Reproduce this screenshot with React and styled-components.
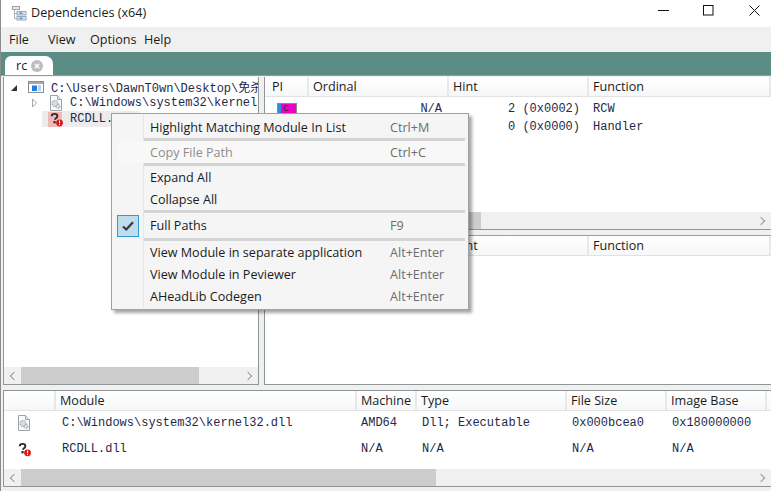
import styled, { createGlobalStyle } from "styled-components";

const uiFont = `"Open Sans", "Noto Sans", sans-serif`;
const monoFont = `"Liberation Mono", "Noto Sans CJK SC", monospace`;

const importColumns = "44px 140px 140px 1fr";
const moduleColumns = "52px 301px 60px 150px 100px 100px 1fr";

export default function App() {
    return (
        <Window>
            <GlobalStyle />
            <TitleBar>
                <AppIcon />
                <TitleText>Dependencies (x64)</TitleText>
                <WindowButtons>
                    <WindowButton><svg width="11" height="11"><path d="M0 5.5h11" stroke="#111" /></svg></WindowButton>
                    <WindowButton><svg width="11" height="11"><rect x=".5" y=".5" width="9.5" height="9.5" fill="none" stroke="#111" /></svg></WindowButton>
                    <WindowButton><svg width="11" height="11"><path d="M.5.5l10 10M10.5.5l-10 10" stroke="#111" /></svg></WindowButton>
                </WindowButtons>
            </TitleBar>
            <MenuBar>
                <MenuTitle $width={39}>File</MenuTitle>
                <MenuTitle $width={42}>View</MenuTitle>
                <MenuTitle $width={54}>Options</MenuTitle>
                <MenuTitle>Help</MenuTitle>
            </MenuBar>
            <TabStrip>
                <Tab>
                    rc
                    <TabClose><svg width="12" height="12"><circle cx="6" cy="6" r="6" fill="#bdbdbd" /><path d="M3.8 3.8l4.4 4.4M8.2 3.8l-4.4 4.4" stroke="#fff" strokeWidth="1.5" /></svg></TabClose>
                </Tab>
            </TabStrip>
            <Workspace>
                <UpperArea>
                    <TreePane>
                        <TreeBody>
                            <TreeRow $indent={5}>
                                <Expander><svg width="9" height="9"><path d="M8 2v6H2z" fill="#333" /></svg></Expander>
                                <RootIcon />
                                <MonoText>C:\Users\DawnT0wn\Desktop\免杀\rc</MonoText>
                            </TreeRow>
                            <TreeRow $indent={26}>
                                <Expander><svg width="9" height="10"><path d="M2.5 1l4 4-4 4z" fill="#fff" stroke="#a6a6a6" /></svg></Expander>
                                <DllIcon />
                                <MonoText>C:\Windows\system32\kernel32.dll</MonoText>
                            </TreeRow>
                            <TreeRow $indent={26} $selected>
                                <Expander />
                                <MissingIcon $tinted />
                                <MonoText>RCDLL.dll</MonoText>
                            </TreeRow>
                        </TreeBody>
                        <Scrollbar $thumbStart={17} $thumbWidth={178} />
                    </TreePane>
                    <RightColumn>
                        <ImportsPane>
                            <HeaderRow $columns={importColumns}>
                                <HeaderCell $first>PI</HeaderCell>
                                <HeaderCell>Ordinal</HeaderCell>
                                <HeaderCell>Hint</HeaderCell>
                                <HeaderCell>Function</HeaderCell>
                            </HeaderRow>
                            <ImportsBody>
                                <ImportRow $columns={importColumns}>
                                    <ImportBadge>c</ImportBadge>
                                    <OrdinalCell>N/A</OrdinalCell>
                                    <HintCell>2 (0x0002)</HintCell>
                                    <FunctionCell>RCW</FunctionCell>
                                </ImportRow>
                                <ImportRow $columns={importColumns}>
                                    <span />
                                    <OrdinalCell />
                                    <HintCell>0 (0x0000)</HintCell>
                                    <FunctionCell>Handler</FunctionCell>
                                </ImportRow>
                            </ImportsBody>
                            <Scrollbar $thumbStart={17} $thumbWidth={199} />
                        </ImportsPane>
                        <ExportsPane>
                            <HeaderRow $columns={importColumns}>
                                <HeaderCell $first>PI</HeaderCell>
                                <HeaderCell>Ordinal</HeaderCell>
                                <HeaderCell>Hint</HeaderCell>
                                <HeaderCell>Function</HeaderCell>
                            </HeaderRow>
                        </ExportsPane>
                    </RightColumn>
                </UpperArea>
                <ModulesPane>
                    <HeaderRow $columns={moduleColumns}>
                        <HeaderCell />
                        <HeaderCell>Module</HeaderCell>
                        <HeaderCell>Machine</HeaderCell>
                        <HeaderCell>Type</HeaderCell>
                        <HeaderCell>File Size</HeaderCell>
                        <HeaderCell>Image Base</HeaderCell>
                        <HeaderCell />
                    </HeaderRow>
                    <ModulesBody>
                        <ModuleRow $columns={moduleColumns}>
                            <ModuleIcon><DllIcon /></ModuleIcon>
                            <ModuleCell $pad={6}>C:\Windows\system32\kernel32.dll</ModuleCell>
                            <ModuleCell $pad={4}>AMD64</ModuleCell>
                            <ModuleCell>Dll; Executable</ModuleCell>
                            <ModuleCell>0x000bcea0</ModuleCell>
                            <ModuleCell>0x180000000</ModuleCell>
                        </ModuleRow>
                        <ModuleRow $columns={moduleColumns}>
                            <ModuleIcon><MissingIcon /></ModuleIcon>
                            <ModuleCell $pad={6}>RCDLL.dll</ModuleCell>
                            <ModuleCell $pad={4}>N/A</ModuleCell>
                            <ModuleCell>N/A</ModuleCell>
                            <ModuleCell>N/A</ModuleCell>
                            <ModuleCell>N/A</ModuleCell>
                        </ModuleRow>
                    </ModulesBody>
                    <Scrollbar $thumbStart={17} $thumbWidth={415} />
                </ModulesPane>
            </Workspace>
            <ContextMenu>
                <MenuItem label="Highlight Matching Module In List" shortcut="Ctrl+M" />
                <MenuSeparator />
                <MenuItem label="Copy File Path" shortcut="Ctrl+C" disabled />
                <MenuSeparator />
                <MenuItem label="Expand All" />
                <MenuItem label="Collapse All" />
                <MenuSeparator />
                <MenuItem label="Full Paths" shortcut="F9" checked />
                <MenuSeparator />
                <MenuItem label="View Module in separate application" shortcut="Alt+Enter" />
                <MenuItem label="View Module in Peviewer" shortcut="Alt+Enter" />
                <MenuItem label="AHeadLib Codegen" shortcut="Alt+Enter" />
            </ContextMenu>
        </Window>
    );
}

function MenuItem({ label, shortcut, disabled, checked }) {
    return (
        <ItemRow $disabled={disabled} $tall={checked}>
            <ItemGutter>
                {checked && (
                    <CheckBox>
                        <svg width="12" height="10" viewBox="0 0 12 10"><path d="M1 5.5l3.2 3L11 1.2" fill="none" stroke="#33393f" strokeWidth="2.2" /></svg>
                    </CheckBox>
                )}
            </ItemGutter>
            <ItemLabel>{label}</ItemLabel>
            <ItemShortcut>{shortcut}</ItemShortcut>
        </ItemRow>
    );
}

function AppIcon() {
    return (
        <IconBox $size={16}>
            <svg width="16" height="16" viewBox="0 0 16 16">
                <path d="M3.5 4v9.5H6M3.5 8.5H6" fill="none" stroke="#b0b0b0" />
                <rect x="1.5" y="1.5" width="7" height="3" fill="#e6e6e6" stroke="#a3a3a3" />
                <rect x="6" y="6.5" width="9" height="3.5" fill="#d6e4f0" stroke="#9aa9b6" />
                <rect x="8.5" y="7.5" width="3" height="1.5" fill="#4f93d8" />
                <rect x="6" y="11.5" width="9" height="3.5" fill="#d6e4f0" stroke="#9aa9b6" />
                <rect x="8.5" y="12.5" width="3" height="1.5" fill="#4f93d8" />
            </svg>
        </IconBox>
    );
}

function RootIcon() {
    return (
        <IconBox $size={16}>
            <svg width="16" height="12" viewBox="0 0 16 12">
                <rect x=".5" y=".5" width="15" height="11" fill="#fff" stroke="#8d8d8d" />
                <rect x="1" y="1" width="14" height="2" fill="#a9a9a9" />
                <rect x="4" y="4.5" width="5" height="5.5" fill="#1f7fe0" />
                <path d="M10 5h3M10 7h3M10 9h3" stroke="#6aa6e0" />
            </svg>
        </IconBox>
    );
}

function DllIcon() {
    return (
        <IconBox $size={14}>
            <svg width="12" height="16" viewBox="0 0 12 16">
                <path d="M.5.5h7l4 4v11H.5z" fill="#fafafa" stroke="#a3a3a3" />
                <path d="M7.5.5v4h4" fill="#e4e4e4" stroke="#a3a3a3" />
                <circle cx="5" cy="8.5" r="3" fill="#d8dde2" stroke="#8793a0" strokeDasharray="1.5 1" />
                <circle cx="8" cy="11.5" r="2" fill="#cfe0ec" stroke="#8793a0" strokeDasharray="1 .8" />
            </svg>
        </IconBox>
    );
}

function MissingIcon({ $tinted }) {
    return (
        <MissingBox $tinted={$tinted}>
            <svg width="16" height="15" viewBox="0 0 16 15">
                <path d="M4 4C4 2.4 5.2 1.5 7 1.5s3 .9 3 2.4c0 1.2-.8 1.7-1.5 2.2-.6.4-1 .8-1 1.6" fill="none" stroke="#2a2a2a" strokeWidth="2" />
                <rect x="5.8" y="9.2" width="2.4" height="2.4" fill="#2a2a2a" />
                <circle cx="12.3" cy="11" r="3.6" fill="#e01010" />
                <path d="M12.3 8.6v2.8M12.3 12.2v1.2" stroke="#fff" strokeWidth="1.2" />
            </svg>
        </MissingBox>
    );
}

const GlobalStyle = createGlobalStyle`
    html, body {
        margin: 0;
        padding: 0;
        background: #f0f0f0;
    }
    * {
        box-sizing: border-box;
    }
`

const Window = styled.div`
    position: relative;
    display: flex;
    flex-direction: column;
    width: 771px;
    height: 491px;
    overflow: hidden;
    background: #f0f0f0;
    border-left: 1px solid #8c8c8c;
    font-family: ${uiFont};
    font-size: 12.6px;
    color: #1b1b1b;
`

const TitleBar = styled.div`
    display: flex;
    align-items: center;
    height: 27px;
    padding-left: 10px;
    background: #fff;
`

const IconBox = styled.span`
    display: inline-flex;
    justify-content: center;
    align-items: center;
    flex: none;
    width: ${(p) => p.$size}px;
`

const TitleText = styled.span`
    margin-left: 4px;
    padding-bottom: 2px;
`

const WindowButtons = styled.div`
    display: flex;
    flex: none;
    margin-left: auto;
    margin-right: -6px;
    padding-bottom: 5px;
`

const WindowButton = styled.span`
    display: flex;
    flex: none;
    justify-content: center;
    width: 45.5px;
`

const MenuBar = styled.div`
    display: flex;
    align-items: center;
    height: 26px;
    padding-left: 8px;
    background: #f0f0f0;
`

const MenuTitle = styled.span`
    width: ${(p) => (p.$width ? `${p.$width}px` : "auto")};
`

const TabStrip = styled.div`
    display: flex;
    align-items: flex-end;
    height: 23px;
    padding-left: 4px;
    background: #5c8d85;
`

const Tab = styled.div`
    display: flex;
    align-items: center;
    gap: 4px;
    width: 48px;
    height: 19px;
    padding-left: 11px;
    background: #fff;
    border-radius: 6px 8px 0 0;
`

const TabClose = styled.span`
    display: flex;
`

const Workspace = styled.div`
    display: flex;
    flex-direction: column;
    gap: 5px;
    padding: 1px 0 4px 2px;
    border-top: 1px solid #9a9a9a;
`

const UpperArea = styled.div`
    display: flex;
    gap: 5px;
    height: 308px;
`

const Pane = styled.div`
    display: flex;
    flex-direction: column;
    overflow: hidden;
    background: #fff;
    border: 1px solid #8f9698;
`

const TreePane = styled(Pane)`
    width: 256px;
    border-top: 0;
`

const TreeBody = styled.div`
    flex: 1;
    padding-top: 2px;
`

const TreeRow = styled.div`
    position: relative;
    display: flex;
    align-items: center;
    height: 16px;
    padding-left: ${(p) => p.$indent}px;
    background: ${(p) => (p.$selected ? "linear-gradient(90deg, transparent 38px, #ececec 38px, #ececec 136px, transparent 136px)" : "none")};
    white-space: nowrap;
`

const Expander = styled.span`
    display: inline-flex;
    flex: none;
    justify-content: center;
    width: 9px;
    margin-right: 10px;
`

const MonoText = styled.span`
    margin-left: 7px;
    font-family: ${monoFont};
    font-size: 12px;
    color: #1d2a4d;
`

const MissingBox = styled.span`
    display: inline-flex;
    flex: none;
    width: 15px;
    height: 15px;
    margin-left: -1px;
    background: ${(p) => (p.$tinted ? "linear-gradient(90deg, #f2b8b8 14px, transparent 14px)" : "none")};
`

const RightColumn = styled.div`
    display: flex;
    flex: 1;
    flex-direction: column;
    gap: 5px;
`

const ImportsPane = styled(Pane)`
    height: 153px;
    border-top: 0;
    border-right: 0;
`

const ExportsPane = styled(Pane)`
    flex: 1;
    border-top-color: #9aa0a2;
    border-right: 0;
`

const ImportsBody = styled.div`
    flex: 1;
    padding-top: 3px;
`

const HeaderRow = styled.div`
    display: grid;
    grid-template-columns: ${(p) => p.$columns};
    flex: none;
    height: 20px;
    background: linear-gradient(#fff, #f6f7f8);
    border-bottom: 1px solid #e2e2e2;
`

const HeaderCell = styled.div`
    padding: 1px 0 0 ${(p) => (p.$first ? "7px" : "4px")};
    border-right: 2px solid #e8e8e8;
    line-height: 18px;
`

const ImportRow = styled.div`
    display: grid;
    grid-template-columns: ${(p) => p.$columns};
    align-items: center;
    height: 18px;
    font-family: ${monoFont};
    font-size: 12px;
    color: #1d2a4d;
`

const ImportBadge = styled.span`
    justify-self: start;
    width: 20px;
    height: 12px;
    margin-left: 12px;
    padding-left: 5px;
    background: linear-gradient(90deg, #2c8ce0 3px, #f000c0 3px);
    border: 1px solid #8a8a8a;
    font-size: 10px;
    line-height: 9px;
    color: #222;
`

const OrdinalCell = styled.span`
    padding-right: 7px;
    text-align: right;
`

const HintCell = styled.span`
    padding-right: 9px;
    text-align: right;
`

const FunctionCell = styled.span`
    padding-left: 4px;
`

const Scrollbar = styled.div`
    flex: none;
    height: 17px;
    background:
        linear-gradient(#cdcdcd, #cdcdcd) ${(p) => p.$thumbStart}px 0 / ${(p) => p.$thumbWidth}px 100% no-repeat,
        #f0f0f0;
    position: relative;

    &::before,
    &::after {
        content: "";
        position: absolute;
        top: 6px;
        width: 5px;
        height: 5px;
        border-left: 1px solid #9a9a9a;
        border-bottom: 1px solid #9a9a9a;
    }
    &::before {
        left: 7px;
        transform: rotate(45deg);
    }
    &::after {
        right: 7px;
        transform: rotate(225deg);
    }
`

const ModulesPane = styled(Pane)`
    height: 97px;
    border-right: 0;
`

const ModulesBody = styled.div`
    flex: 1;
    margin-top: -1px;
`

const ModuleRow = styled.div`
    display: grid;
    grid-template-columns: ${(p) => p.$columns};
    align-items: center;
    height: 26px;
    font-family: ${monoFont};
    font-size: 12px;
    color: #1d2a4d;
`

const ModuleIcon = styled.span`
    display: flex;
    justify-content: center;
    padding-right: 12px;
`

const ModuleCell = styled.span`
    padding-left: ${(p) => p.$pad ?? 5}px;
    white-space: nowrap;
`

const ContextMenu = styled.div`
    position: absolute;
    left: 110px;
    top: 113px;
    width: 358px;
    height: 197px;
    padding: 2px 3px 2px 32px;
    background: #f5f5f5;
    border: 1px solid #a0a0a0;
    box-shadow: 3px 3px 3px rgba(0, 0, 0, 0.35);

    &::before {
        content: "";
        position: absolute;
        left: 31px;
        top: 1px;
        bottom: 1px;
        width: 1px;
        background: #e6e6e6;
    }
`

const ItemRow = styled.div`
    position: relative;
    display: flex;
    align-items: center;
    height: ${(p) => (p.$tall ? "25px" : "22px")};
    color: ${(p) => (p.$disabled ? "#8d8d8d" : "#1b1b1b")};
    background: ${(p) => (p.$disabled ? "#f8f8f8" : "none")};
    box-shadow: ${(p) => (p.$disabled ? "-27px 0 0 #f8f8f8" : "none")};
`

const ItemGutter = styled.span`
    position: absolute;
    left: -27px;
    top: 0;
    bottom: 0;
    width: 26px;
    display: flex;
    align-items: center;
`

const CheckBox = styled.span`
    display: flex;
    justify-content: center;
    align-items: center;
    width: 22px;
    height: 22px;
    background: #bfdcea;
    border: 1px solid #3399d6;
`

const ItemLabel = styled.span`
    width: 240px;
    margin-left: 6px;
    white-space: nowrap;
`

const ItemShortcut = styled.span`
    color: #6d6d6d;
`

const MenuSeparator = styled.div`
    height: 3px;
    background: #d4d4d4;
`
